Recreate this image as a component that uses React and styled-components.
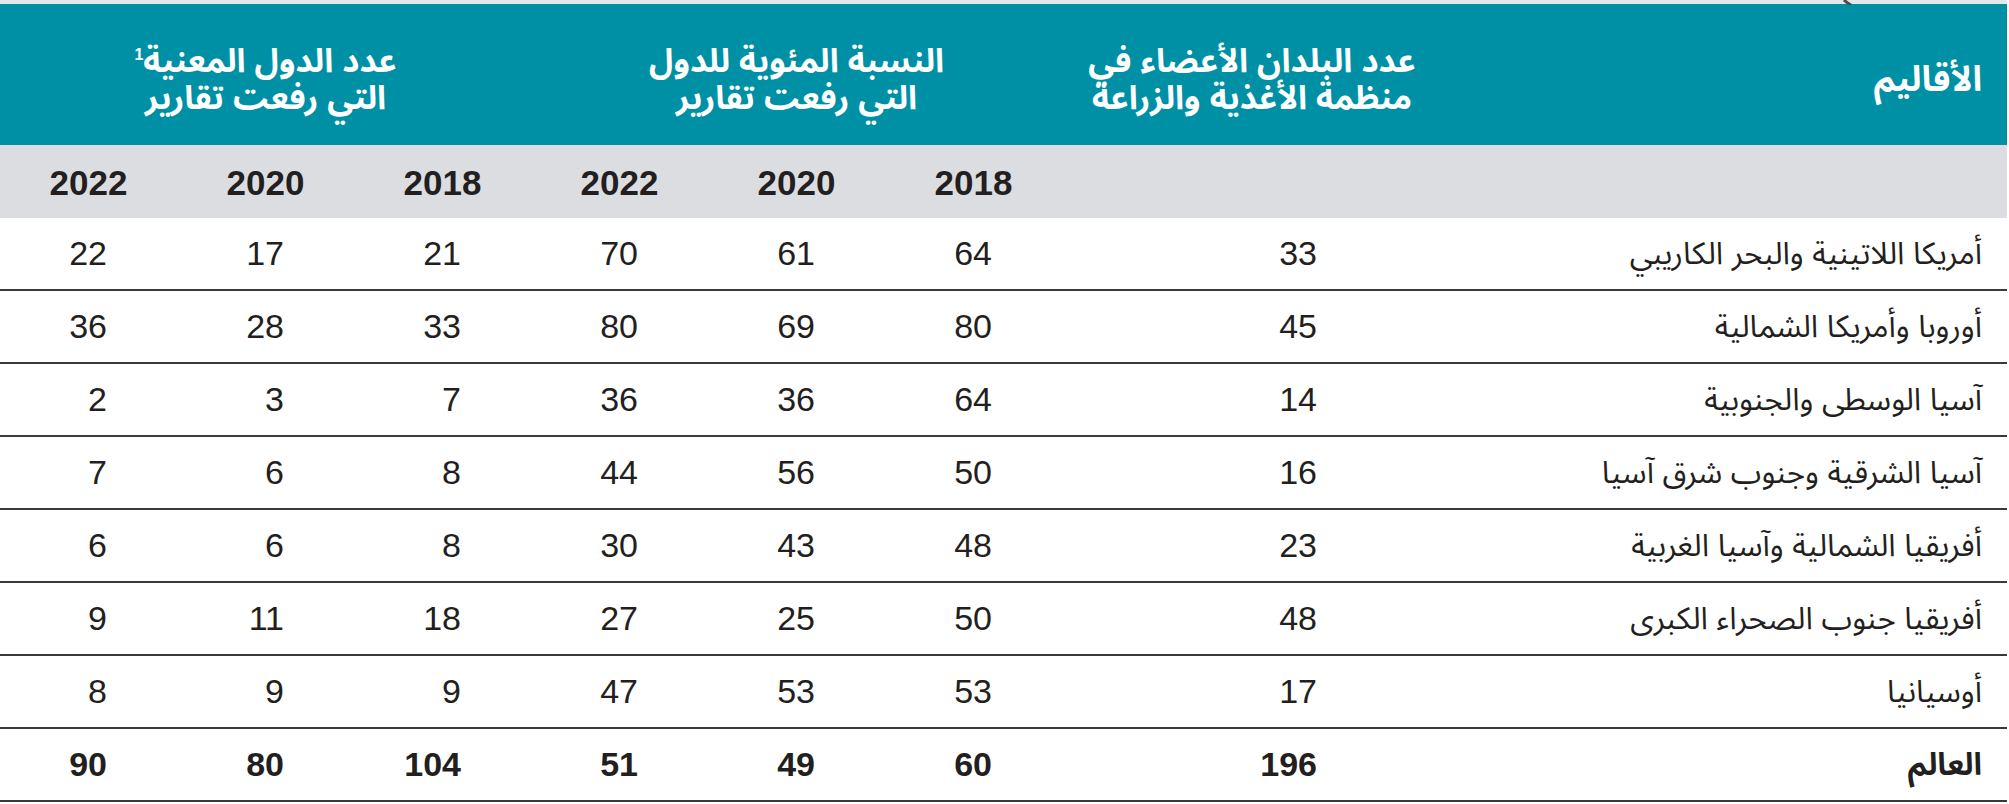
import React from 'react';
import styled, { createGlobalStyle } from 'styled-components';

const GlobalStyle = createGlobalStyle`
  html, body {
    margin: 0;
    padding: 0;
    background: #ffffff;
  }
  body {
    font-family: "Liberation Sans", "Noto Sans Arabic", "DejaVu Sans", sans-serif;
    color: #231f20;
  }
`;

const rows = [
  { region: 'أمريكا اللاتينية والبحر الكاريبي', members: 33, pct: [64, 61, 70], reports: [21, 17, 22] },
  { region: 'أوروبا وأمريكا الشمالية', members: 45, pct: [80, 69, 80], reports: [33, 28, 36] },
  { region: 'آسيا الوسطى والجنوبية', members: 14, pct: [64, 36, 36], reports: [7, 3, 2] },
  { region: 'آسيا الشرقية وجنوب شرق آسيا', members: 16, pct: [50, 56, 44], reports: [8, 6, 7] },
  { region: 'أفريقيا الشمالية وآسيا الغربية', members: 23, pct: [48, 43, 30], reports: [8, 6, 6] },
  { region: 'أفريقيا جنوب الصحراء الكبرى', members: 48, pct: [50, 25, 27], reports: [18, 11, 9] },
  { region: 'أوسيانيا', members: 17, pct: [53, 53, 47], reports: [9, 9, 8] },
];

const world = { region: 'العالم', members: 196, pct: [60, 49, 51], reports: [104, 80, 90] };

const years = [2018, 2020, 2022, 2018, 2020, 2022];

const Page = styled.div`
  width: 2007px;
`;

const TopStrip = styled.div`
  position: relative;
  height: 4px;
  background: #e2e7ea;
`;

const Fragment = styled.svg`
  position: absolute;
  left: 1841px;
  top: 0;
`;

const Table = styled.div`
  display: grid;
  direction: rtl;
  grid-template-columns: 565px 380px repeat(6, 177px);
`;

const HeadCell = styled.div`
  grid-column: span ${(p) => p.$span || 1};
  height: 141px;
  background: #0090a6;
  color: #ffffff;
  font-weight: 700;
  font-size: ${(p) => (p.$start ? 35 : 33)}px;
  line-height: 37px;
  display: flex;
  align-items: center;
  justify-content: ${(p) => (p.$start ? 'flex-start' : 'center')};
  padding-right: ${(p) => (p.$start ? '25px' : '0')};
  padding-top: 8px;
  text-align: center;
  box-sizing: border-box;

  sup {
    font-size: 16px;
    line-height: 0;
    vertical-align: 12px;
  }
`;

const YearCell = styled.div`
  height: 73px;
  background: #dcdde1;
  font-weight: 700;
  font-size: 35px;
  display: flex;
  align-items: center;
  justify-content: center;
  padding-top: 2px;
  box-sizing: border-box;
`;

const Cell = styled.div`
  height: 73px;
  box-sizing: border-box;
  border-bottom: 2px solid #3a3a3a;
  display: flex;
  align-items: center;
  justify-content: flex-start;
  padding-right: ${(p) => p.$pad}px;
  font-size: ${(p) => (p.$text ? 31 : 34)}px;
  font-weight: ${(p) => (p.$bold ? 700 : 400)};
  white-space: nowrap;
`;

const DataRow = ({ row, bold }) => (
  <>
    <Cell $pad={25} $text $bold={bold}>{row.region}</Cell>
    <Cell $pad={125} $bold={bold}>{row.members}</Cell>
    {[...row.pct, ...row.reports].map((v, i) => (
      <Cell key={i} $pad={70} $bold={bold}>{v}</Cell>
    ))}
  </>
);

export default function App() {
  return (
    <Page>
      <GlobalStyle />
      <TopStrip>
        <Fragment width="14" height="5" viewBox="0 0 14 5">
          <path d="M3 0 Q6 3 10 5" stroke="#4a4a4a" strokeWidth="3" fill="none" />
        </Fragment>
      </TopStrip>
      <Table>
        <HeadCell $start>الأقاليم</HeadCell>
        <HeadCell>
          عدد البلدان الأعضاء في
          <br />
          منظمة الأغذية والزراعة
        </HeadCell>
        <HeadCell $span={3}>
          النسبة المئوية للدول
          <br />
          التي رفعت تقارير
        </HeadCell>
        <HeadCell $span={3}>
          <span>
            عدد الدول المعنية<sup>1</sup>
            <br />
            التي رفعت تقارير
          </span>
        </HeadCell>

        <YearCell />
        <YearCell />
        {years.map((y, i) => (
          <YearCell key={i}>{y}</YearCell>
        ))}

        {rows.map((r) => (
          <DataRow key={r.region} row={r} />
        ))}
        <DataRow row={world} bold />
      </Table>
    </Page>
  );
}
